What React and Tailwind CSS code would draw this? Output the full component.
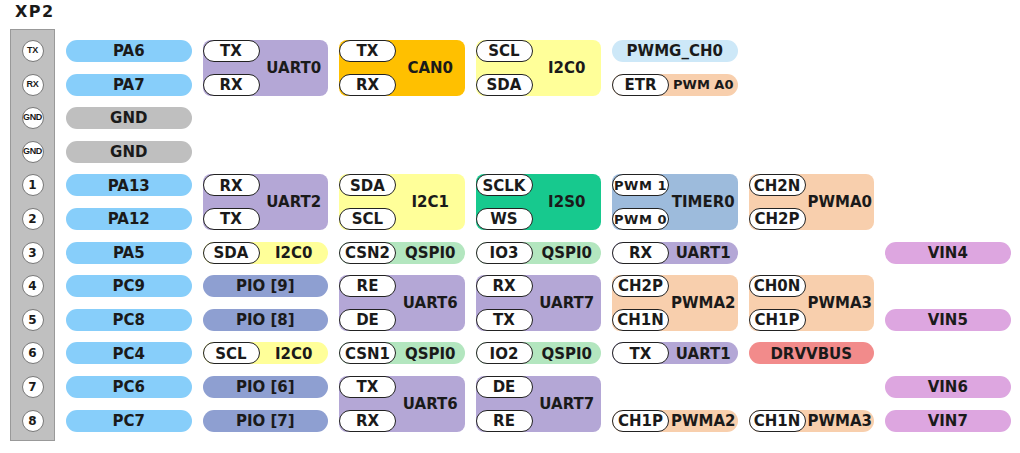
const pins = ["TX", "RX", "GND", "GND", "1", "2", "3", "4", "5", "6", "7", "8"];

const pinNames = [
  { label: "PA6", bg: "bg-[#87cefa]" },
  { label: "PA7", bg: "bg-[#87cefa]" },
  { label: "GND", bg: "bg-[#bfbfbf]" },
  { label: "GND", bg: "bg-[#bfbfbf]" },
  { label: "PA13", bg: "bg-[#87cefa]" },
  { label: "PA12", bg: "bg-[#87cefa]" },
  { label: "PA5", bg: "bg-[#87cefa]" },
  { label: "PC9", bg: "bg-[#87cefa]" },
  { label: "PC8", bg: "bg-[#87cefa]" },
  { label: "PC4", bg: "bg-[#87cefa]" },
  { label: "PC6", bg: "bg-[#87cefa]" },
  { label: "PC7", bg: "bg-[#87cefa]" },
];

const UART = "bg-[#b4a7d6]";
const I2C = "bg-[#ffff99]";
const PWMA = "bg-[#f8cfad]";
const QSPI = "bg-[#b3e6bf]";
const PIO = "bg-[#8e9fd1]";
const VIN = "bg-[#dda6e0]";

const cells = [
  { pos: "col-start-2 row-start-1 row-span-2", bg: UART, label: "UART0", subs: ["TX", "RX"] },
  { pos: "col-start-3 row-start-1 row-span-2", bg: "bg-[#ffc000]", label: "CAN0", subs: ["TX", "RX"] },
  { pos: "col-start-4 row-start-1 row-span-2", bg: I2C, label: "I2C0", subs: ["SCL", "SDA"] },
  { pos: "col-start-5 row-start-1", bg: "bg-[#cde8f8]", label: "PWMG_CH0" },
  { pos: "col-start-5 row-start-2", bg: PWMA, label: "PWM A0", subs: ["ETR"], small: true },

  { pos: "col-start-2 row-start-5 row-span-2", bg: UART, label: "UART2", subs: ["RX", "TX"] },
  { pos: "col-start-3 row-start-5 row-span-2", bg: I2C, label: "I2C1", subs: ["SDA", "SCL"] },
  { pos: "col-start-4 row-start-5 row-span-2", bg: "bg-[#17c98e]", label: "I2S0", subs: ["SCLK", "WS"] },
  { pos: "col-start-5 row-start-5 row-span-2", bg: "bg-[#9dbbdc]", label: "TIMER0", subs: ["PWM 1", "PWM 0"], smallSub: true },
  { pos: "col-start-6 row-start-5 row-span-2", bg: PWMA, label: "PWMA0", subs: ["CH2N", "CH2P"] },

  { pos: "col-start-2 row-start-7", bg: I2C, label: "I2C0", subs: ["SDA"] },
  { pos: "col-start-3 row-start-7", bg: QSPI, label: "QSPI0", subs: ["CSN2"] },
  { pos: "col-start-4 row-start-7", bg: QSPI, label: "QSPI0", subs: ["IO3"] },
  { pos: "col-start-5 row-start-7", bg: UART, label: "UART1", subs: ["RX"] },
  { pos: "col-start-7 row-start-7", bg: VIN, label: "VIN4" },

  { pos: "col-start-2 row-start-8", bg: PIO, label: "PIO [9]" },
  { pos: "col-start-3 row-start-8 row-span-2", bg: UART, label: "UART6", subs: ["RE", "DE"] },
  { pos: "col-start-4 row-start-8 row-span-2", bg: UART, label: "UART7", subs: ["RX", "TX"] },
  { pos: "col-start-5 row-start-8 row-span-2", bg: PWMA, label: "PWMA2", subs: ["CH2P", "CH1N"] },
  { pos: "col-start-6 row-start-8 row-span-2", bg: PWMA, label: "PWMA3", subs: ["CH0N", "CH1P"] },

  { pos: "col-start-2 row-start-9", bg: PIO, label: "PIO [8]" },
  { pos: "col-start-7 row-start-9", bg: VIN, label: "VIN5" },

  { pos: "col-start-2 row-start-10", bg: I2C, label: "I2C0", subs: ["SCL"] },
  { pos: "col-start-3 row-start-10", bg: QSPI, label: "QSPI0", subs: ["CSN1"] },
  { pos: "col-start-4 row-start-10", bg: QSPI, label: "QSPI0", subs: ["IO2"] },
  { pos: "col-start-5 row-start-10", bg: UART, label: "UART1", subs: ["TX"] },
  { pos: "col-start-6 row-start-10", bg: "bg-[#f28b8b]", label: "DRVVBUS" },

  { pos: "col-start-2 row-start-11", bg: PIO, label: "PIO [6]" },
  { pos: "col-start-3 row-start-11 row-span-2", bg: UART, label: "UART6", subs: ["TX", "RX"] },
  { pos: "col-start-4 row-start-11 row-span-2", bg: UART, label: "UART7", subs: ["DE", "RE"] },
  { pos: "col-start-7 row-start-11", bg: VIN, label: "VIN6" },

  { pos: "col-start-2 row-start-12", bg: PIO, label: "PIO [7]" },
  { pos: "col-start-5 row-start-12", bg: PWMA, label: "PWMA2", subs: ["CH1P"] },
  { pos: "col-start-6 row-start-12", bg: PWMA, label: "PWMA3", subs: ["CH1N"] },
  { pos: "col-start-7 row-start-12", bg: VIN, label: "VIN7" },
];

function SubPill({ text, small }) {
  return (
    <div
      className={`flex h-[22px] w-[57px] shrink-0 items-center justify-center rounded-full border border-[#222] bg-white pt-[1px] ${
        small ? "text-[13px] tracking-[0.5px]" : "text-[15px]"
      }`}
    >
      {text}
    </div>
  );
}

function Cell({ cell }) {
  const tall = cell.pos.includes("row-span-2");
  if (!cell.subs) {
    return (
      <div className={`${cell.pos} ${cell.bg} flex items-center justify-center rounded-full pt-[1px] text-[15px]`}>
        {cell.label}
      </div>
    );
  }
  return (
    <div className={`${cell.pos} ${cell.bg} flex ${tall ? "rounded-[8px]" : "rounded-full"}`}>
      <div className="flex flex-col justify-between">
        {cell.subs.map((s, i) => (
          <SubPill key={i} text={s} small={cell.smallSub} />
        ))}
      </div>
      <div
        className={`flex min-w-0 flex-1 items-center justify-center whitespace-nowrap pt-[1px] ${
          cell.small ? "text-[13px]" : "text-[15px]"
        }`}
      >
        {cell.label}
      </div>
    </div>
  );
}

export default function App() {
  return (
    <div className="h-[453px] w-[1020px] bg-white font-['DejaVu_Sans',sans-serif] font-bold text-[#1a1a1a]">
      <div className="pl-[15px] pt-[2px] text-[16px] leading-[20px] tracking-[1.5px]">XP2</div>
      <div className="flex items-start">
        <div className="ml-[10px] mt-[7px] flex w-[45px] flex-col items-center gap-y-[11.6px] border border-[#999] bg-[#c0c0c0] pb-[8px] pt-[10px]">
          {pins.map((p, i) => (
            <div
              key={i}
              className={`flex h-[22px] w-[22px] items-center justify-center rounded-full border border-[#777] bg-white ${
                p.length > 1
                  ? "font-['Liberation_Sans',sans-serif] text-[9px] tracking-[-0.3px]"
                  : "text-[12px]"
              }`}
            >
              {p}
            </div>
          ))}
        </div>
        <div className="ml-[11px] mt-[18px] grid grid-cols-[repeat(7,125.5px)] grid-rows-[repeat(12,22px)] gap-x-[11px] gap-y-[11.6px]">
          {pinNames.map((p, i) => (
            <div
              key={i}
              className={`col-start-1 ${p.bg} flex items-center justify-center rounded-full pt-[1px] text-[15px]`}
              style={{ gridRowStart: i + 1 }}
            >
              {p.label}
            </div>
          ))}
          {cells.map((c, i) => (
            <Cell key={i} cell={c} />
          ))}
        </div>
      </div>
    </div>
  );
}
